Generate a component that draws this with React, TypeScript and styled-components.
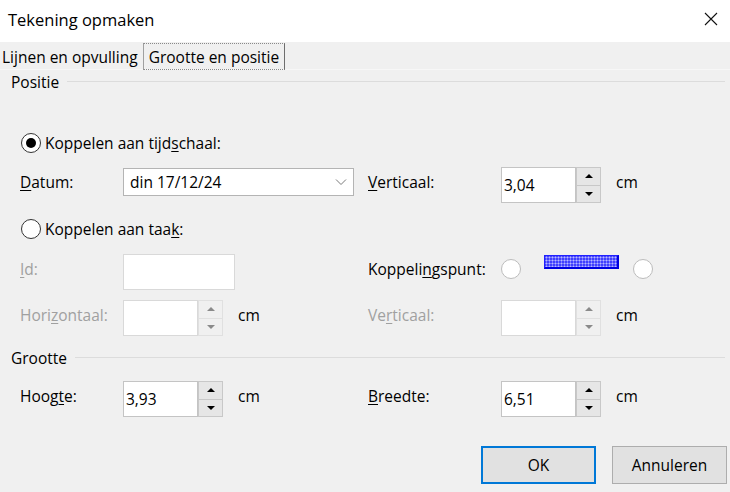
import styled, { createGlobalStyle } from "styled-components";

const GlobalStyle = createGlobalStyle`
  html, body {
    margin: 0;
    padding: 0;
    background: #f0f0f0;
  }
  body {
    font-family: "Open Sans", "Noto Sans", sans-serif;
    font-size: 15.5px;
    color: #000;
  }
`;

const Window = styled.div`
  width: 730px;
  height: 492px;
  display: flex;
  flex-direction: column;
  background: #f0f0f0;
  overflow: hidden;
`;

const TitleBar = styled.div`
  height: 42px;
  background: #fff;
  display: flex;
  align-items: center;
  justify-content: space-between;
  padding: 0 12px 0 8px;
  box-sizing: border-box;
`;

const Title = styled.div`
  font-size: 16.5px;
  line-height: 20px;
  margin-top: -2px;
`;

const CloseBtn = styled.div`
  width: 14px;
  height: 14px;
  display: flex;
  margin-top: -4px;
`;

const TabStrip = styled.div`
  height: 28px;
  display: flex;
  align-items: stretch;
  border-bottom: 1px solid #f7f7f7;
  box-sizing: border-box;
`;

const Tab = styled.div<{ $active?: boolean }>`
  padding: 0 ${(p) => (p.$active ? "5px" : "4px")} 0 ${(p) => (p.$active ? "5px" : "1px")};
  line-height: 27px;
  height: 27px;
  box-sizing: border-box;
  border: 1px ${(p) => (p.$active ? "dotted #8a8a8a" : "solid transparent")};
  border-left: 1px solid ${(p) => (p.$active ? "#a0a0a0" : "transparent")};
  border-right: 1px solid ${(p) => (p.$active ? "#6e6e6e" : "transparent")};
  margin-top: 1px;
`;

const GroupHeader = styled.div<{ $mt: number }>`
  margin-top: ${(p) => p.$mt}px;
  height: 20px;
  display: flex;
  align-items: center;
  gap: 8px;
  padding: 0 5px 0 11px;
  line-height: 20px;
  &::after {
    content: "";
    flex: 1;
    height: 1px;
    background: #dcdcdc;
    margin-top: -1px;
  }
`;

const RadioRow = styled.label<{ $mt: number }>`
  margin-top: ${(p) => p.$mt}px;
  height: 20px;
  display: flex;
  align-items: center;
  gap: 4px;
  padding-left: 21px;
  line-height: 20px;
`;

const Radio = styled.span<{ $checked?: boolean; $disabled?: boolean }>`
  width: 20px;
  height: 20px;
  box-sizing: border-box;
  border-radius: 50%;
  border: 1px solid ${(p) => (p.$disabled ? "#bcbcbc" : "#333")};
  background: #fff;
  display: flex;
  align-items: center;
  justify-content: center;
  flex: none;
  &::after {
    content: "";
    width: 10px;
    height: 10px;
    border-radius: 50%;
    background: ${(p) => (p.$checked ? "#000" : "transparent")};
  }
`;

const FormRow = styled.div<{ $mt: number }>`
  margin-top: ${(p) => p.$mt}px;
  height: 36px;
  display: grid;
  grid-template-columns: 103px 245px 133px 1fr;
  align-items: start;
  padding-left: 20px;
`;

const Label = styled.div<{ $disabled?: boolean }>`
  line-height: 30px;
  color: ${(p) => (p.$disabled ? "#a0a0a0" : "#000")};
  white-space: nowrap;
`;

const Combo = styled.div`
  margin-top: 1px;
  width: 231px;
  height: 28px;
  box-sizing: border-box;
  background: #fff;
  border: 1px solid #b4b4b4;
  display: flex;
  align-items: center;
  justify-content: space-between;
  padding: 0 6px 0 6px;
  line-height: 26px;
`;

const SpinWrap = styled.div`
  display: flex;
  align-items: flex-start;
`;

const TextBox = styled.div<{ $width: number; $disabled?: boolean }>`
  width: ${(p) => p.$width}px;
  height: 36px;
  box-sizing: border-box;
  background: #fff;
  border: 1px solid ${(p) => (p.$disabled ? "#d9d9d9" : "#c4c4c4")};
  padding-left: 2px;
  line-height: 34px;
`;

const Spinner = styled.div`
  width: 25px;
  height: 36px;
  display: flex;
  flex-direction: column;
`;

const SpinBtn = styled.div<{ $disabled?: boolean; $down?: boolean }>`
  flex: 1;
  box-sizing: border-box;
  background: ${(p) => (p.$disabled ? "#f0f0f0" : "#e6e6e6")};
  border: 1px solid ${(p) => (p.$disabled ? "#e0e0e0" : "#c8c8c8")};
  border-top: ${(p) => (p.$down ? "none" : undefined)};
  display: flex;
  align-items: center;
  justify-content: center;
  &::after {
    content: "";
    width: 0;
    height: 0;
    border-left: 4px solid transparent;
    border-right: 4px solid transparent;
    ${(p) =>
      p.$down
        ? `border-top: 4px solid ${p.$disabled ? "#8a8a8a" : "#000"};`
        : `border-bottom: 4px solid ${p.$disabled ? "#8a8a8a" : "#000"};`}
  }
`;

const Unit = styled.div`
  margin-left: 15px;
  line-height: 30px;
`;

const AnchorPicker = styled.div`
  display: flex;
  align-items: flex-start;
  padding-top: 5px;
`;

const AnchorBar = styled.div`
  width: 75px;
  height: 14px;
  box-sizing: border-box;
  margin: -4px 14px 0 23px;
  border: 1px solid #2020ff;
  border-right: 2px solid #0000e0;
  border-bottom: 2px solid #0000e0;
  background-color: #4040ff;
  background-image: radial-gradient(circle, #b8b8ff 0.8px, transparent 1.2px);
  background-size: 3px 3px;
`;

const Footer = styled.div`
  margin-top: 29px;
  display: flex;
  justify-content: flex-end;
  gap: 16px;
  padding-right: 3px;
`;

const Button = styled.button<{ $primary?: boolean }>`
  width: 115px;
  height: 38px;
  box-sizing: border-box;
  background: #e1e1e1;
  border: ${(p) => (p.$primary ? "2px solid #0078d7" : "1px solid #adadad")};
  font-family: inherit;
  font-size: 15.5px;
  color: #000;
  padding: 0;
`;

const U = styled.span`
  text-decoration: underline;
  text-underline-offset: 2px;
`;

type SpinProps = { value?: string; disabled?: boolean };

const SpinField = ({ value, disabled }: SpinProps) => (
  <SpinWrap>
    <TextBox $width={75} $disabled={disabled}>
      {value}
    </TextBox>
    <Spinner>
      <SpinBtn $disabled={disabled} />
      <SpinBtn $disabled={disabled} $down />
    </Spinner>
    <Unit>cm</Unit>
  </SpinWrap>
);

export default function App() {
  return (
    <>
      <GlobalStyle />
      <Window>
        <TitleBar>
          <Title>Tekening opmaken</Title>
          <CloseBtn>
            <svg width="14" height="14" viewBox="0 0 14 14">
              <path d="M1 1L13 13M13 1L1 13" stroke="#111" strokeWidth="1.1" fill="none" />
            </svg>
          </CloseBtn>
        </TitleBar>

        <TabStrip>
          <Tab>Lijnen en opvulling</Tab>
          <Tab $active>Grootte en positie</Tab>
        </TabStrip>

        <GroupHeader $mt={2}>Positie</GroupHeader>

        <RadioRow $mt={41}>
          <Radio $checked />
          <span>
            Koppelen aan tijd<U>s</U>chaal:
          </span>
        </RadioRow>

        <FormRow $mt={14}>
          <Label>
            <U>D</U>atum:
          </Label>
          <Combo>
            <span>din 17/12/24</span>
            <svg width="12" height="8" viewBox="0 0 12 8">
              <path d="M1 1.5L6 6.5L11 1.5" stroke="#7a7a7a" strokeWidth="1" fill="none" />
            </svg>
          </Combo>
          <Label>
            <U>V</U>erticaal:
          </Label>
          <SpinField value="3,04" />
        </FormRow>

        <RadioRow $mt={16}>
          <Radio />
          <span>
            Koppelen aan taa<U>k</U>:
          </span>
        </RadioRow>

        <FormRow $mt={15}>
          <Label $disabled>
            <U>I</U>d:
          </Label>
          <TextBox $width={112} $disabled />
          <Label>
            Koppeli<U>n</U>gspunt:
          </Label>
          <AnchorPicker>
            <Radio $disabled />
            <AnchorBar />
            <Radio $disabled />
          </AnchorPicker>
        </FormRow>

        <FormRow $mt={10}>
          <Label $disabled>
            Hori<U>z</U>ontaal:
          </Label>
          <SpinField disabled />
          <Label $disabled>
            Ve<U>r</U>ticaal:
          </Label>
          <SpinField disabled />
        </FormRow>

        <GroupHeader $mt={12}>Grootte</GroupHeader>

        <FormRow $mt={13}>
          <Label>
            Hoog<U>t</U>e:
          </Label>
          <SpinField value="3,93" />
          <Label>
            <U>B</U>reedte:
          </Label>
          <SpinField value="6,51" />
        </FormRow>

        <Footer>
          <Button $primary>OK</Button>
          <Button>Annuleren</Button>
        </Footer>
      </Window>
    </>
  );
}
